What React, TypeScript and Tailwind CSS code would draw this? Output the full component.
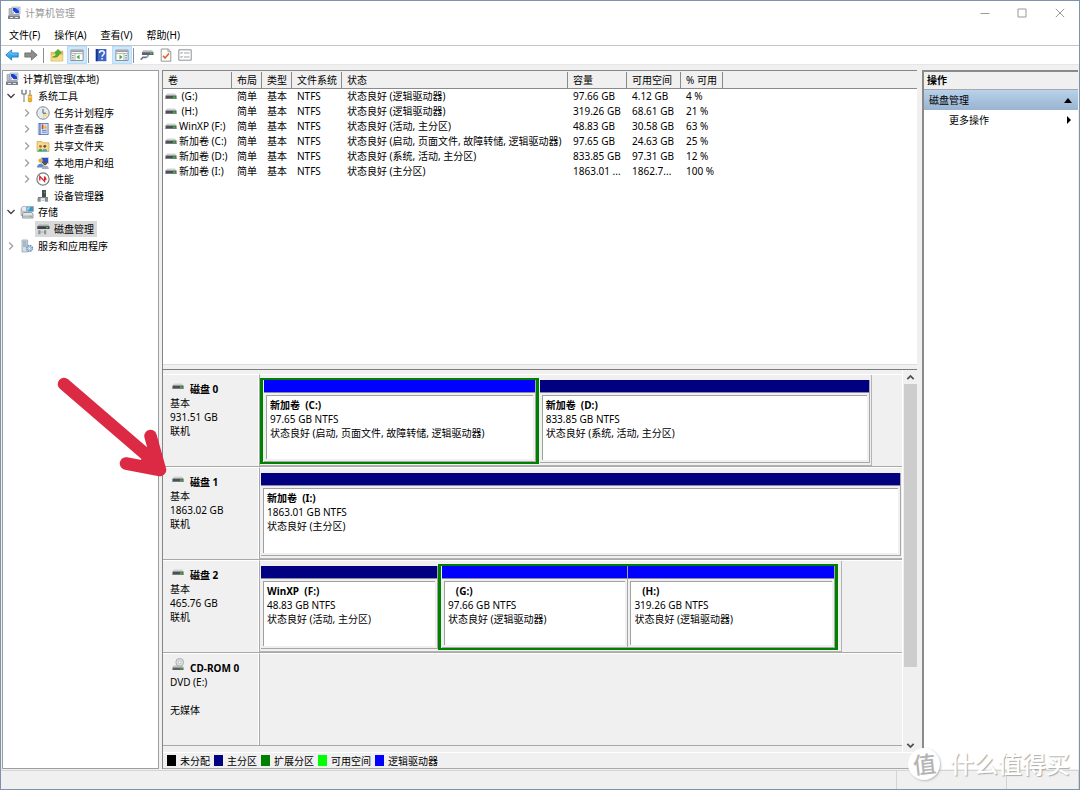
import React from "react";

type SvgProps = { children: React.ReactNode; className?: string; box?: string };

function Svg({ children, className = "size-[14px]", box = "0 0 14 14" }: SvgProps) {
  return (
    <svg viewBox={box} className={"shrink-0 " + className} fill="none" aria-hidden="true">
      {children}
    </svg>
  );
}

function ComputerIcon() {
  return (
    <Svg>
      <path d="M5 1h8v7H5z" fill="#dfe3ea" stroke="#8d94a0" strokeWidth=".6" />
      <path d="M6 2h6v5H6z" fill="#1b3fd0" />
      <path d="M8.5 2H12v3z" fill="#7fb0ff" />
      <path d="M2 2.5h2.6v6H2z" fill="#b9bec8" stroke="#7d828c" strokeWidth=".5" />
      <path d="M1 9.5 3 8h9l1 2v3H1z" fill="#a4a9b1" />
      <path d="M1 10h12v3H1z" fill="#7b828b" />
      <path d="M3 11h3v1H3zM8 11h3v1H8z" fill="#e4e7ea" />
      <path d="M5.5 4 9 7.5 7 8z" fill="#fff" />
    </Svg>
  );
}

function ToolsIcon() {
  return (
    <Svg>
      <path d="M2 .8v3.4L4 5.600l2-1.400V.8M4 5v8" stroke="#8c9298" strokeWidth="1.700" />
      <path d="M4 5.800v6.700" stroke="#eef0f2" strokeWidth=".7" />
      <path d="M10 1v5" stroke="#9aa1a8" strokeWidth="1.500" />
      <path d="M8.300 6h3.400v6.300q-1.700 1.700-3.400 0z" fill="#f2b01e" stroke="#b97b09" strokeWidth=".5" />
      <path d="M8.300 8h3.400" stroke="#fff1b8" strokeWidth=".8" />
    </Svg>
  );
}

function ClockIcon() {
  return (
    <Svg>
      <circle cx="7" cy="7" r="6.200" fill="#f3f1e8" stroke="#7c858f" strokeWidth="1" />
      <circle cx="7" cy="7" r="4.800" fill="#e2eaf3" />
      <path d="M7 7h4.700A4.700 4.700 0 0 1 7 11.700z" fill="#f0d9a0" />
      <path d="M7 3v4.200h3" stroke="#4f5d6b" strokeWidth="1" />
    </Svg>
  );
}

function EventIcon() {
  return (
    <Svg>
      <path d="M2.500 1h10v12h-10z" fill="#4872b5" />
      <path d="M4.500 1.800h7.200v10.400H4.500z" fill="#d5e0f2" />
      <path d="M1.500 3h2.500M1.500 5h2.500M1.500 7h2.500M1.500 9h2.500M1.500 11h2.500" stroke="#b4bfd0" strokeWidth=".9" />
      <path d="M5.800 2.500h1.600v4.500H5.800z" fill="#d23b30" />
      <path d="m9.400 3 1.900 3.500H7.600z" fill="#f0b823" />
      <path d="M6 8.400h4.600M6 10.200h4.600" stroke="#5681c0" strokeWidth=".9" />
    </Svg>
  );
}

function ShareIcon() {
  return (
    <Svg>
      <path d="M1 2.500h5l1 1.300h6v8.700H1z" fill="#f6d98c" stroke="#c8993a" strokeWidth=".6" />
      <circle cx="4.500" cy="7.300" r="1.400" fill="#b46a3a" />
      <circle cx="8.800" cy="7.300" r="1.400" fill="#6d4a34" />
      <path d="M2.200 12.500c0-3.800 4.600-3.800 4.600 0z" fill="#2fae71" />
      <path d="M6.600 12.500c0-3.800 4.600-3.800 4.600 0z" fill="#46a4c8" />
    </Svg>
  );
}

function UsersIcon() {
  return (
    <Svg>
      <path d="M5 1h8v7H5z" fill="#c9ced8" />
      <path d="M6 2h6v5H6z" fill="#2a52c8" />
      <circle cx="4.600" cy="4.600" r="2.200" fill="#d8b13b" />
      <path d="M1 11.500c0-5 7.200-5 7.200 0z" fill="#6488c6" />
      <circle cx="9" cy="7.300" r="1.900" fill="#6d4b33" />
      <path d="M5.800 13c0-4.600 7-4.600 7 0z" fill="#a3aebf" />
    </Svg>
  );
}

function PerfIcon() {
  return (
    <Svg>
      <circle cx="7" cy="7" r="6.100" fill="#fff" stroke="#777d84" strokeWidth="1.200" />
      <path d="M3.800 8.600V4.400l4.800 5V4.600l1.600 3.200" stroke="#d8232a" strokeWidth="1.300" />
    </Svg>
  );
}

function DeviceIcon() {
  return (
    <Svg>
      <path d="M6 1h4v7.500H6z" fill="#474c52" />
      <path d="M8.200 2.400h1v1.800h-1z" fill="#3ad03a" />
      <path d="M2 8h10v1.200H2z" fill="#7d8288" />
      <path d="M1.500 9h3.200v3.800H1.500zM8.800 9H12v3.800H8.800z" fill="#8b9096" />
      <path d="M5.400 10.500h2.800v1.400H5.400z" fill="#c1c5c9" />
    </Svg>
  );
}

function StorageIcon() {
  return (
    <Svg>
      <path d="M1 3.500h4v7H1z" fill="#cfd6dd" stroke="#8b949c" strokeWidth=".6" />
      <circle cx="4.200" cy="4" r="2.800" fill="#e9edf0" stroke="#98a1a8" strokeWidth=".7" />
      <path d="M6.500 1.500h7v5h-7z" fill="#3799cd" stroke="#a0a8b0" strokeWidth=".8" />
      <path d="M7.200 2.200h3l-2.200 3.600h-.8z" fill="#9cdaf5" />
      <path d="m2.500 9 1.300-1.500h8L13 9v4H2.500z" fill="#e1e5e8" stroke="#6f777e" strokeWidth=".7" />
      <path d="M3 10.400h9.600v2H3z" fill="#b4babf" />
      <path d="M10 10.800h1.500v1H10z" fill="#3dd23d" />
    </Svg>
  );
}

function DiskMgmtIcon() {
  return (
    <Svg>
      <path d="m1.500 4.200 1.200-1.700h9.600l1 1.700z" fill="#a9aeb3" />
      <path d="M1.300 4.200h12.200V7H1.300z" fill="#3d4247" />
      <path d="M10 5h2.200v1.200H10z" fill="#3ad03a" />
      <path d="M2.300 8.200h2.200v4H2.300zM8 8.200h2.200v4H8z" fill="#8c9197" />
      <path d="M5 9.400h2.300v1.300H5z" fill="#b2b6ba" />
    </Svg>
  );
}

function ServicesIcon() {
  return (
    <Svg>
      <path d="M2 1h5.600v12H2z" fill="#d4dde5" stroke="#8b9aa8" strokeWidth=".7" />
      <path d="M3 3h3.600M3 5h3.600M3 7h3.600" stroke="#6c7f92" strokeWidth=".8" />
      <circle cx="9.600" cy="9.400" r="2.800" fill="#cfe1f0" stroke="#6c97bd" strokeWidth="1.600" strokeDasharray="1.500 .7" />
      <circle cx="9.600" cy="9.400" r="1" fill="#fff" stroke="#6c97bd" strokeWidth=".5" />
    </Svg>
  );
}

function DriveIcon() {
  return (
    <Svg className="h-[7px] w-[12px]" box="0 0 12 7">
      <path d="M.5 2.500 2 .5h8l1.500 2z" fill="#cfd2d3" />
      <path d="M.5 2.500h11V6H.5z" fill="#4b5053" />
      <path d="M.5 5.200h11V6H.5z" fill="#83888b" />
      <path d="M8 3.400h2.500v1.500H8z" fill="#35c435" />
    </Svg>
  );
}

function CdDriveIcon() {
  return (
    <Svg className="h-[13px] w-[12px]" box="0 0 12 13">
      <circle cx="7.700" cy="4.300" r="3.900" fill="#dcdedf" stroke="#9ea2a4" strokeWidth=".8" />
      <circle cx="7.700" cy="4.300" r="1.400" fill="#fff" stroke="#9ea2a4" strokeWidth=".6" />
      <path d="m.5 9.500 1.200-2h8.600l1.200 2z" fill="#b9bdc0" />
      <path d="M.5 9.500h11V12H.5z" fill="#5b6063" />
      <path d="M8.300 10.200h2.200v1H8.300z" fill="#35d335" />
    </Svg>
  );
}

function BackIcon() {
  return (
    <Svg>
      <path d="M.8 7 6.600 1.900v3h6.600v4.200H6.600v3z" fill="#38a7ea" stroke="#1676bd" strokeWidth=".8" strokeLinejoin="round" />
      <path d="M2.500 6.800 6 3.800V6h6.500" stroke="#8bd2fa" strokeWidth=".7" />
    </Svg>
  );
}

function ForwardIcon() {
  return (
    <Svg>
      <path d="M13.200 7 7.400 1.900v3H.8v4.200h6.600v3z" fill="#8d8d8d" stroke="#6b6b6b" strokeWidth=".8" strokeLinejoin="round" />
    </Svg>
  );
}

function FolderUpIcon() {
  return (
    <Svg>
      <path d="M1 4.500h3.500l1-1.300h7.300V13H1z" fill="#ecc667" stroke="#c79c3a" strokeWidth=".6" />
      <path d="M1.300 7h11.200v5.700H1.300z" fill="#f7dd8e" />
      <path d="M2.500 9c2.800-.3 3.700-1.800 3.900-3.800H4.800L8 1.300l3.600 3.900H9.400C9.100 8.300 7 10 2.500 9z" fill="#49b32f" stroke="#2b8a1b" strokeWidth=".5" />
    </Svg>
  );
}

function PaneIcon({ flip = false }: { flip?: boolean }) {
  return (
    <Svg>
      <path d="M.9 2.100h12.200v10.400H.9z" fill="#fff" stroke="#868686" strokeWidth=".9" />
      <path d="M1.200 2.500h11.600v1.600H1.200z" fill="#9b9b9b" />
      <path d="M1 5.600h12" stroke="#a4a4a4" strokeWidth=".8" />
      {flip ? (
        <>
          <path d="M9 5.600v7" stroke="#999" strokeWidth=".8" />
          <path d="M10.200 7.500h1.800M10.200 9.300h1.800M10.200 11h1.800" stroke="#5b87bd" strokeWidth=".9" />
          <path d="m4.500 6.800 3 2.300-3 2.300z" fill="#3fac2f" />
        </>
      ) : (
        <>
          <path d="M5 5.600v7" stroke="#999" strokeWidth=".8" />
          <path d="M2 7.500h1.800M2 9.300h1.800M2 11h1.800" stroke="#8a8a8a" strokeWidth=".9" />
          <path d="m9.500 6.800-3 2.300 3 2.300z" fill="#3fac2f" />
        </>
      )}
    </Svg>
  );
}

function HelpIcon() {
  return (
    <Svg>
      <path d="M1.800 1h10.600v12.200H1.800z" fill="#3f66c6" />
      <path d="M1.800 1h1.900v12.200H1.800z" fill="#16348b" />
      <path d="M5.500 5c0-3 4.800-2.900 4.800-.2 0 2-2.200 1.900-2.200 4M8.100 10v1.600" stroke="#fff" strokeWidth="1.500" />
    </Svg>
  );
}

function DriveKeyIcon() {
  return (
    <Svg className="h-[12px] w-[14px]" box="0 0 14 12">
      <path d="m2 3.200 1.200-2h9l1.300 2z" fill="#b7babd" />
      <path d="M2 3.200h11.500V6H2z" fill="#5b6165" />
      <path d="M10 4h2.200v1.200H10z" fill="#35c435" />
      <path d="M8.500 6 6.500 8.500" stroke="#7aa3c4" strokeWidth="1.800" />
      <path d="M6.500 8.300H3L.8 10.800" stroke="#6d747a" strokeWidth="1.700" />
    </Svg>
  );
}

function DocCheckIcon() {
  return (
    <Svg>
      <path d="M2.200 1h7l2.600 2.600v9.600H2.200z" fill="#fff" stroke="#8b8b8b" strokeWidth=".9" />
      <path d="M9 1v2.800h2.800" stroke="#8b8b8b" strokeWidth=".8" />
      <path d="m4 7.800 2 2.300 4-4.600" stroke="#e8602c" strokeWidth="1.600" />
    </Svg>
  );
}

function ListIcon() {
  return (
    <Svg>
      <path d="M.8 1.800h12.400v10.400H.8z" fill="#fff" stroke="#858585" strokeWidth=".9" />
      <path d="m2.300 4.600.8.900L4.500 4M2.300 8.600l.8.900L4.500 8" stroke="#4c86b5" strokeWidth=".9" />
      <path d="M6 5h5.500M6 9h5.500" stroke="#999" strokeWidth=".9" />
    </Svg>
  );
}

function Chevron({ open }: { open: boolean }) {
  return (
    <Svg className="size-[10px]" box="0 0 10 10">
      <path
        d={open ? "m1.500 3 3.500 3.500L8.500 3" : "m3.200 1.500 3.500 3.500-3.500 3.500"}
        stroke={open ? "#404040" : "#a0a0a0"}
        strokeWidth="1.300"
      />
    </Svg>
  );
}

type Node = {
  label: string;
  icon: React.ReactNode;
  indent: string;
  open?: boolean;
  selected?: boolean;
};

const nodes: Node[] = [
  { label: "系统工具", icon: <ToolsIcon />, indent: "pl-[3px]", open: true },
  { label: "任务计划程序", icon: <ClockIcon />, indent: "pl-[19px]", open: false },
  { label: "事件查看器", icon: <EventIcon />, indent: "pl-[19px]", open: false },
  { label: "共享文件夹", icon: <ShareIcon />, indent: "pl-[19px]", open: false },
  { label: "本地用户和组", icon: <UsersIcon />, indent: "pl-[19px]", open: false },
  { label: "性能", icon: <PerfIcon />, indent: "pl-[19px]", open: false },
  { label: "设备管理器", icon: <DeviceIcon />, indent: "pl-[19px]" },
  { label: "存储", icon: <StorageIcon />, indent: "pl-[3px]", open: true },
  { label: "磁盘管理", icon: <DiskMgmtIcon />, indent: "pl-[19px]", selected: true },
  { label: "服务和应用程序", icon: <ServicesIcon />, indent: "pl-[3px]", open: false },
];

function Tree() {
  return (
    <nav className="w-[157px] shrink-0 border border-[#9a9ea4] bg-white">
      <ul className="flex h-[183px] flex-col">
        <li className="flex flex-1 items-center gap-[4px] pl-[2px]">
          <ComputerIcon />
          计算机管理(本地)
        </li>
        {nodes.map((n) => (
          <li key={n.label} className={"flex flex-1 items-center " + n.indent}>
            <span className="flex w-[13px] shrink-0 items-center">
              {n.open !== undefined && <Chevron open={n.open} />}
            </span>
            <button
              type="button"
              className={
                "flex h-full items-center gap-[4px] pr-[3px] pl-[1px] " + (n.selected ? "bg-[#d9d9d9]" : "")
              }
            >
              {n.icon}
              {n.label}
            </button>
          </li>
        ))}
      </ul>
    </nav>
  );
}

const volumes = [
  [" (G:)", "状态良好 (逻辑驱动器)", "97.66 GB", "4.12 GB", "4 %"],
  [" (H:)", "状态良好 (逻辑驱动器)", "319.26 GB", "68.61 GB", "21 %"],
  ["WinXP (F:)", "状态良好 (活动, 主分区)", "48.83 GB", "30.58 GB", "63 %"],
  ["新加卷 (C:)", "状态良好 (启动, 页面文件, 故障转储, 逻辑驱动器)", "97.65 GB", "24.63 GB", "25 %"],
  ["新加卷 (D:)", "状态良好 (系统, 活动, 主分区)", "833.85 GB", "97.31 GB", "12 %"],
  ["新加卷 (I:)", "状态良好 (主分区)", "1863.01 ...", "1862.7...", "100 %"],
];

const headings = ["卷", "布局", "类型", "文件系统", "状态", "容量", "可用空间", "% 可用"];

function VolumeTable() {
  return (
    <table className="w-full table-fixed border-collapse whitespace-pre">
      <colgroup>
        <col className="w-[69px]" />
        <col className="w-[30px]" />
        <col className="w-[30px]" />
        <col className="w-[50px]" />
        <col className="w-[226px]" />
        <col className="w-[59px]" />
        <col className="w-[54px]" />
        <col className="w-[42px]" />
        <col />
      </colgroup>
      <thead>
        <tr className="h-[18px] bg-[#f0f0f0] text-left shadow-[inset_0_-1px_0_#8a8a8a]">
          {headings.map((h) => (
            <th key={h} scope="col" className="p-0 font-normal">
              <div className="h-[17px] border-r border-[#8a8a8a] pl-[5px] leading-[17px]">{h}</div>
            </th>
          ))}
          <td className="p-0" />
        </tr>
      </thead>
      <tbody>
        {volumes.map(([name, state, size, free, pct]) => (
          <tr key={name} className="h-[15px] leading-[15px]">
            <td className="p-0">
              <div className="flex items-center gap-[2px] pl-[2px]">
                <DriveIcon />
                {name}
              </div>
            </td>
            <td className="p-0 pl-[5px]">简单</td>
            <td className="p-0 pl-[5px]">基本</td>
            <td className="p-0 pl-[5px]">NTFS</td>
            <td className="p-0 pl-[5px]">{state}</td>
            <td className="p-0 pl-[5px]">{size}</td>
            <td className="p-0 pl-[5px]">{free}</td>
            <td className="p-0 pl-[5px]">{pct}</td>
            <td className="p-0" />
          </tr>
        ))}
      </tbody>
    </table>
  );
}

type PartProps = { name: string; size: string; state: string; bar: string; className: string };

function Partition({ name, size, state, bar, className }: PartProps) {
  return (
    <div className={"flex min-w-0 flex-col border-r border-b border-[#a6a6a6] bg-[#f0f0f0] " + className}>
      <div className={"h-[13px] shrink-0 border-b border-[#8c8c9c] " + bar} />
      <div className="mx-[2px] mt-[2px] mb-[2px] flex-1 overflow-hidden border-t border-l border-[#a0a0a0] bg-white pt-[2px] pl-[3px] leading-[14px] whitespace-pre">
        <div className="font-bold">{name}</div>
        <div>{size}</div>
        <div>{state}</div>
      </div>
    </div>
  );
}

type DiskProps = { name: string; lines: string[]; optical?: boolean; children?: React.ReactNode };

function DiskRow({ name, lines, optical = false, children }: DiskProps) {
  return (
    <section className="flex h-[93px] border-b border-[#a8a8a8]">
      <div className="w-[97px] shrink-0 border-t border-r border-t-white border-r-[#a8a8a8] pt-[7px] pl-[7px] leading-[14px] shadow-[inset_-1px_0_0_#fff]">
        <h2 className="flex h-[14px] items-center pl-[2px] font-bold">
          <span className={"flex h-[20px] w-[18px] items-end " + (optical ? "pb-[7px]" : "pb-[9px]")}>
            {optical ? <CdDriveIcon /> : <DriveIcon />}
          </span>
          {name}
        </h2>
        {lines.map((l, i) => (
          <p key={i} className="h-[14px]">
            {l}
          </p>
        ))}
      </div>
      <div className="flex min-w-0 flex-1 border-t border-white">{children}</div>
    </section>
  );
}

const primary = "bg-[#000080]";
const logical = "bg-[#0000ff]";

function DiskView() {
  return (
    <div className="flex border-t border-[#7d7d7d]">
      <div className="min-w-0 flex-1 pt-[4px] pb-[6px]">
        <DiskRow name="磁盘 0" lines={["基本", "931.51 GB", "联机"]}>
          <div className="flex w-[95.3%] border-r border-b border-[#b4b4b4] pr-px">
            <div className="mt-[3px] mb-px flex w-[45.7%] border-x-[3px] border-y-2 border-[#008000] pl-px">
              <Partition
                className="flex-1"
                bar={logical}
                name="新加卷  (C:)"
                size="97.65 GB NTFS"
                state="状态良好 (启动, 页面文件, 故障转储, 逻辑驱动器)"
              />
            </div>
            <Partition
              className="mt-[5px] mb-[2px] ml-px flex-1"
              bar={primary}
              name="新加卷  (D:)"
              size="833.85 GB NTFS"
              state="状态良好 (系统, 活动, 主分区)"
            />
          </div>
        </DiskRow>
        <DiskRow name="磁盘 1" lines={["基本", "1863.02 GB", "联机"]}>
          <div className="flex w-full border-b border-[#b4b4b4] pr-px">
            <Partition
              className="mt-[5px] mb-[2px] ml-px flex-1"
              bar={primary}
              name="新加卷  (I:)"
              size="1863.01 GB NTFS"
              state="状态良好 (主分区)"
            />
          </div>
        </DiskRow>
        <DiskRow name="磁盘 2" lines={["基本", "465.76 GB", "联机"]}>
          <div className="flex w-[90.7%] border-r border-b border-[#b4b4b4] pr-[3px]">
            <Partition
              className="mt-[5px] mb-[2px] ml-px w-[30.6%]"
              bar={primary}
              name="WinXP  (F:)"
              size="48.83 GB NTFS"
              state="状态良好 (活动, 主分区)"
            />
            <div className="mt-[3px] mb-px flex flex-1 border-x-[3px] border-y-2 border-[#008000] pl-px">
              <Partition
                className="w-[47.4%]"
                bar={logical}
                name="   (G:)"
                size="97.66 GB NTFS"
                state="状态良好 (逻辑驱动器)"
              />
              <Partition
                className="flex-1"
                bar={logical}
                name="   (H:)"
                size="319.26 GB NTFS"
                state="状态良好 (逻辑驱动器)"
              />
            </div>
          </div>
        </DiskRow>
        <DiskRow name="CD-ROM 0" optical lines={["DVD (E:)", "", "无媒体"]} />
      </div>
      <div className="flex w-[15px] shrink-0 flex-col items-center border-l border-white">
        <button type="button" aria-label="向上滚动" className="flex h-[14px] items-center">
          <Svg className="size-[9px]" box="0 0 10 10">
            <path d="m1.500 6.800 3.500-3.500 3.500 3.500" stroke="#505050" strokeWidth="2" />
          </Svg>
        </button>
        <div className="w-[13px] flex-[284] bg-[#cdcdcd]" />
        <div className="flex-[71]" />
        <button type="button" aria-label="向下滚动" className="flex h-[14px] items-center">
          <Svg className="size-[9px]" box="0 0 10 10">
            <path d="m1.500 3.200 3.500 3.500 3.500-3.500" stroke="#505050" strokeWidth="2" />
          </Svg>
        </button>
      </div>
    </div>
  );
}

const legend = [
  ["未分配", "bg-black"],
  ["主分区", "bg-[#000080]"],
  ["扩展分区", "bg-[#008000]"],
  ["可用空间", "bg-[#00ff00]"],
  ["逻辑驱动器", "bg-[#0000ff]"],
];

function Toolbar() {
  const plain = "flex items-center justify-center";
  const on = "flex w-[20px] items-center justify-center self-stretch border border-[#b5dcfa] bg-[#cce8ff]";
  return (
    <div className="flex h-[19px] items-center border-b border-[#e6e6e6] pl-[4px]">
      <button type="button" aria-label="后退" className={plain}><BackIcon /></button>
      <button type="button" aria-label="前进" className={plain + " ml-[5px]"}><ForwardIcon /></button>
      <i className="ml-[5px] h-[15px] w-px bg-[#8e8e8e]" />
      <button type="button" aria-label="上一级" className={plain + " ml-[6px]"}><FolderUpIcon /></button>
      <button type="button" aria-label="显示控制台树" className={on + " ml-[3px]"}><PaneIcon /></button>
      <i className="ml-[1px] h-[15px] w-px bg-[#8e8e8e]" />
      <button type="button" aria-label="帮助" className={plain + " ml-[5px]"}><HelpIcon /></button>
      <button type="button" aria-label="显示操作窗格" className={on + " ml-[4px]"}><PaneIcon flip /></button>
      <i className="ml-[1px] h-[15px] w-px bg-[#8e8e8e]" />
      <button type="button" aria-label="设置" className={plain + " ml-[6px]"}><DriveKeyIcon /></button>
      <button type="button" aria-label="检查" className={plain + " ml-[5px]"}><DocCheckIcon /></button>
      <button type="button" aria-label="属性" className={plain + " ml-[5px]"}><ListIcon /></button>
    </div>
  );
}

function Actions() {
  return (
    <aside className="w-[156px] shrink-0 border-t-2 border-l-2 border-[#8a8a8a] bg-white">
      <h2 className="h-[18px] border-b border-[#a8a8a8] bg-[#f0f0f0] pl-[3px] leading-[16px] font-bold">操作</h2>
      <button
        type="button"
        className="flex h-[20px] w-full items-center justify-between bg-linear-to-b from-[#b9d1ea] to-[#99b4d1] pr-[6px] pl-[5px]"
      >
        磁盘管理
        <Svg className="h-[5px] w-[8px]" box="0 0 8 5">
          <path d="M4 0 8 5H0z" fill="#000" />
        </Svg>
      </button>
      <button type="button" className="flex h-[20px] w-full items-center justify-between pr-[7px] pl-[25px]">
        更多操作
        <Svg className="h-[8px] w-[4px]" box="0 0 4 8">
          <path d="M0 0 4 4 0 8z" fill="#000" />
        </Svg>
      </button>
    </aside>
  );
}

export default function App() {
  return (
    <div
      lang="zh-CN"
      className="relative flex min-h-screen flex-col bg-[#7d93ad] p-px font-['Noto_Sans','Noto_Sans_CJK_SC',sans-serif] text-[10px] leading-[14px] text-black"
    >
      <div className="flex flex-1 flex-col bg-[#f0f0f0]">
        <header className="bg-white">
          <div className="flex h-[24px] items-center pl-[6px] text-[#999]">
            <ComputerIcon />
            <h1 className="ml-[4px] flex-1">计算机管理</h1>
            <button type="button" aria-label="最小化" className="flex w-[37px] justify-center">
              <Svg className="size-[10px]" box="0 0 10 10"><path d="M.5 5.500h9" stroke="#999" /></Svg>
            </button>
            <button type="button" aria-label="最大化" className="flex w-[38px] justify-center">
              <Svg className="size-[10px]" box="0 0 10 10"><path d="M1 1h8v8H1z" stroke="#999" /></Svg>
            </button>
            <button type="button" aria-label="关闭" className="flex w-[38px] justify-center">
              <Svg className="size-[10px]" box="0 0 10 10"><path d="m.8.8 8.400 8.400M9.200.8.8 9.200" stroke="#999" /></Svg>
            </button>
          </div>
          <div className="flex h-[21px] items-center gap-[14px] border-b border-[#c4c4c4] pl-[8px]">
            <button type="button">文件(F)</button>
            <button type="button">操作(A)</button>
            <button type="button">查看(V)</button>
            <button type="button">帮助(H)</button>
          </div>
          <Toolbar />
        </header>

        <div className="flex flex-1 gap-[3px] pt-[5px] pr-px pb-[1px] pl-px">
          <Tree />
          <main className="mr-[2px] flex min-w-0 flex-1 flex-col border-t border-l border-[#858585]">
            <div className="min-h-[180px] flex-1 border-b border-[#dcdcdc] bg-white">
              <VolumeTable />
            </div>
            <div className="h-[4px]" />
            <DiskView />
            <ul className="flex h-[17px] items-center border-t border-b border-t-white border-b-[#a8a8a8] pl-[4px]">
              {legend.map(([label, color]) => (
                <li key={label} className="mr-[4px] flex items-center gap-[4px]">
                  <span className={"h-[11px] w-[9px] " + color} />
                  {label}
                </li>
              ))}
            </ul>
          </main>
          <Actions />
        </div>

        <footer className="flex h-[19px] justify-end border-t border-[#d4d4d4]">
          <div className="w-[110px] border-l border-[#d4d4d4]" />
          <div className="w-[73px] border-x border-[#d4d4d4]" />
        </footer>
      </div>

      <svg
        viewBox="0 0 112 104"
        className="pointer-events-none absolute top-[375px] left-[56px] h-[104px] w-[112px]"
        fill="none"
        aria-hidden="true"
      >
        <path
          d="M8 9 98 86.500M94.500 61 104 95 70 88.500"
          stroke="#dc2944"
          strokeWidth="12.500"
          strokeLinecap="round"
          strokeLinejoin="round"
        />
        <path d="M89.500 72H98l6 23-24-3 5-7z" fill="#dc2944" />
      </svg>

      <div className="pointer-events-none absolute right-[10px] bottom-[10px] flex items-center gap-[10px]">
        <span className="flex size-[32px] items-center justify-center rounded-full bg-white shadow-[1px_1px_2px_#bbb]">
          <span className="-rotate-6 text-[23px] leading-[30px] font-medium text-[#b4b4b4]">值</span>
        </span>
        <span className="text-[24px] leading-[32px] font-medium text-white [text-shadow:1px_1px_1px_#aaa]">
          什么值得买
        </span>
      </div>
    </div>
  );
}
